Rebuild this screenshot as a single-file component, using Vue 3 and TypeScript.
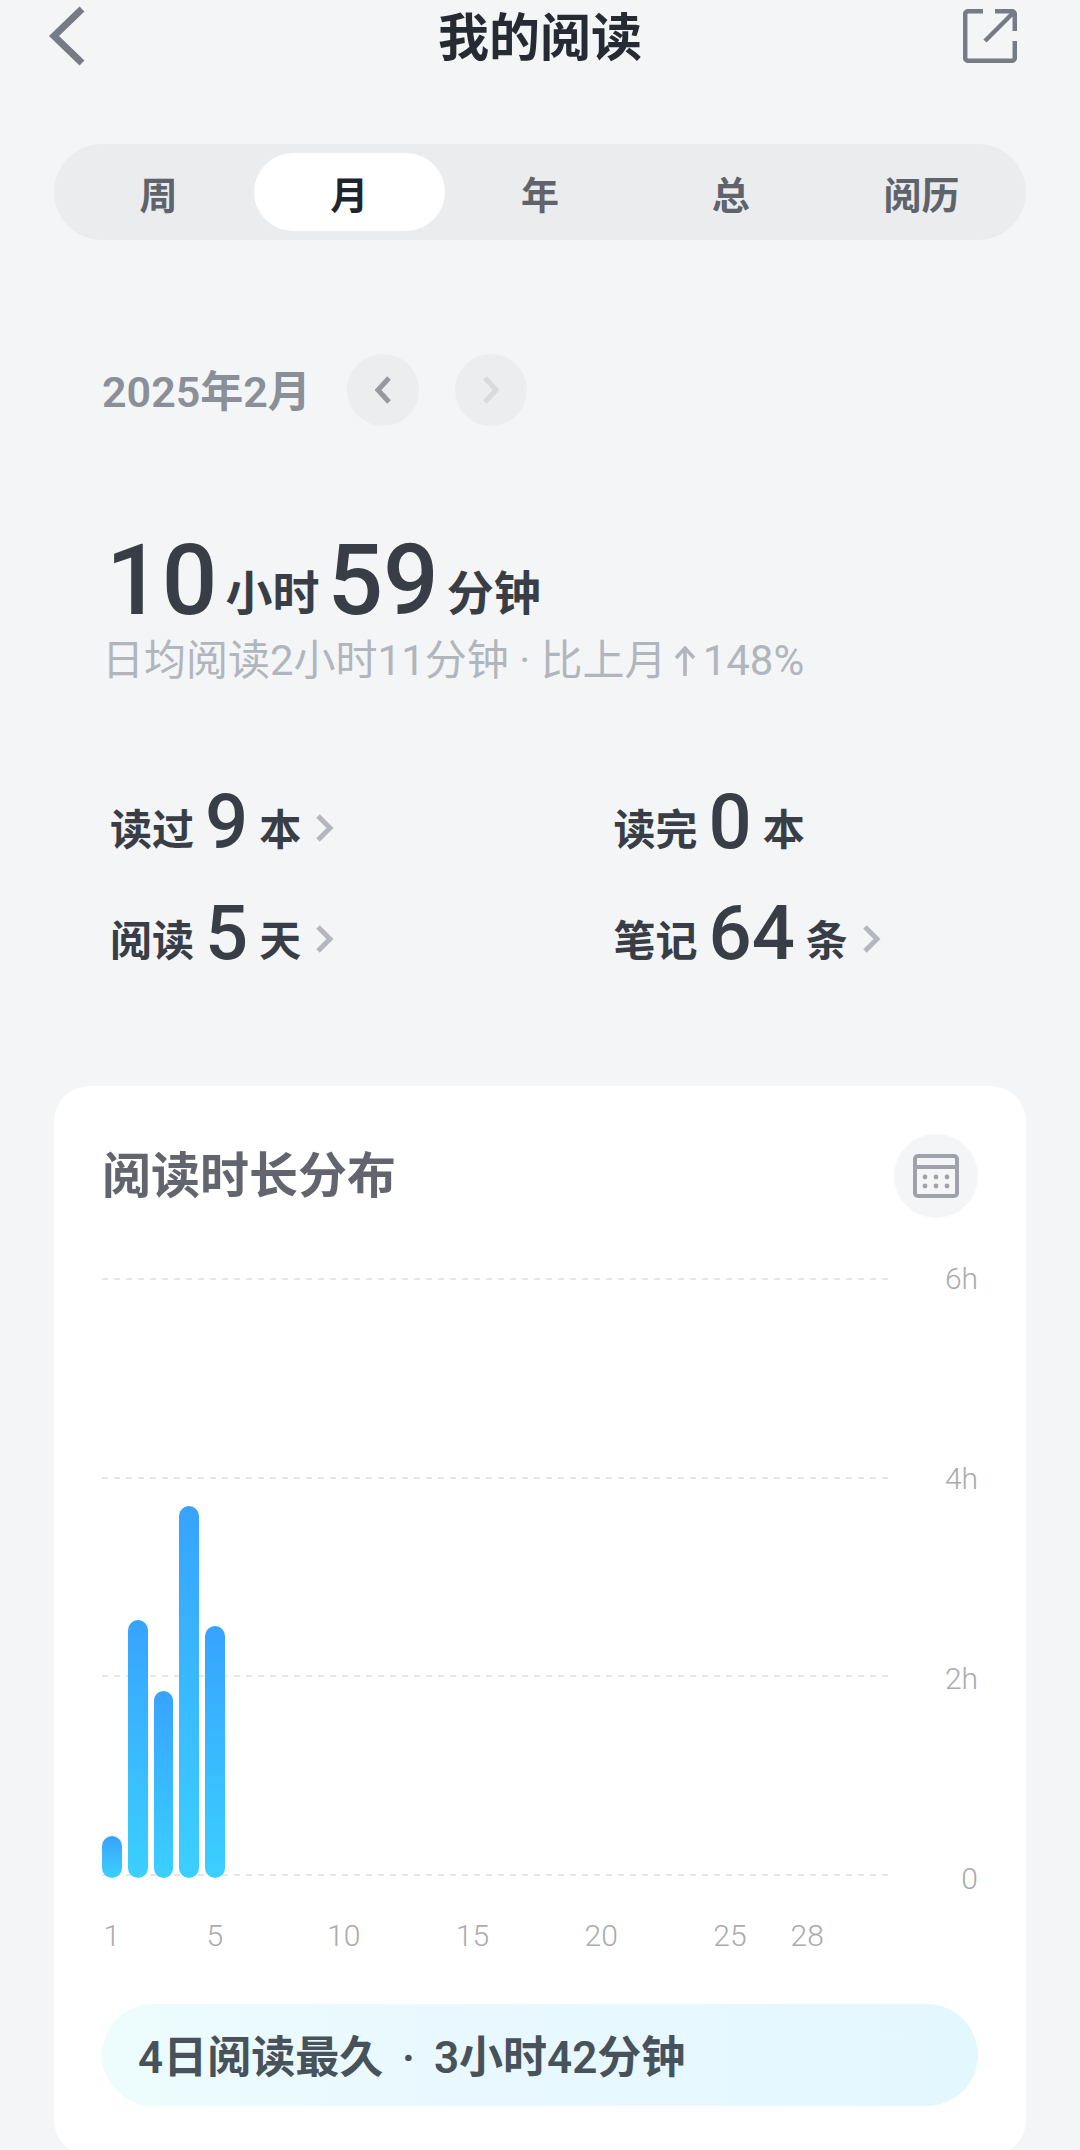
<script setup lang="ts">
import { ref } from 'vue'

interface Stat {
  label: string
  value: number
  unit: string
  link: boolean
}

interface DayBar {
  day: number
  minutes: number
}

const tabs: string[] = ['周', '月', '年', '总', '阅历']
const activeTab = ref('月')

const stats: Stat[] = [
  { label: '读过', value: 9, unit: '本', link: true },
  { label: '读完', value: 0, unit: '本', link: false },
  { label: '阅读', value: 5, unit: '天', link: true },
  { label: '笔记', value: 64, unit: '条', link: true },
]

const maxMinutes = 360
const axis: string[] = ['6h', '4h', '2h', '0']
const bars: DayBar[] = [
  { day: 1, minutes: 25 },
  { day: 2, minutes: 155 },
  { day: 3, minutes: 112 },
  { day: 4, minutes: 223 },
  { day: 5, minutes: 151 },
]
const dayLabels: number[] = [1, 5, 10, 15, 20, 25, 28]

const barHeight = (minutes: number): string => `${(minutes / maxMinutes) * 100}%`
</script>

<template>
  <main class="page">
    <header class="top">
      <button class="icon-btn" type="button" aria-label="返回">
        <svg width="38" height="60" viewBox="0 0 38 60" fill="none" stroke="#777b83" stroke-width="7">
          <path d="M34 3 6 30l28 27" />
        </svg>
      </button>
      <h1 class="title">我的阅读</h1>
      <button class="icon-btn" type="button" aria-label="分享">
        <svg width="54" height="54" viewBox="0 0 54 54" fill="none" stroke="#777b83" stroke-width="4.5">
          <path d="M20 2.2H5a2.8 2.8 0 0 0-2.8 2.8v44a2.8 2.8 0 0 0 2.8 2.8h44a2.8 2.8 0 0 0 2.8-2.8V32M32 2.2h17a2.8 2.8 0 0 1 2.8 2.8v17M51 3 22 32" />
        </svg>
      </button>
    </header>

    <nav class="tabs">
      <button
        v-for="tab in tabs"
        :key="tab"
        type="button"
        class="tab"
        :class="{ active: tab === activeTab }"
        @click="activeTab = tab"
      >
        {{ tab }}
      </button>
    </nav>

    <section class="summary">
      <div class="period">
        <span class="date">2025年2月</span>
        <button class="round" type="button" aria-label="上个月">
          <svg width="16" height="28" viewBox="0 0 16 28" fill="none" stroke="#96999d" stroke-width="5">
            <path d="M14 2 3 14l11 12" />
          </svg>
        </button>
        <button class="round" type="button" aria-label="下个月" disabled>
          <svg width="16" height="28" viewBox="0 0 16 28" fill="none" stroke="#d8dadc" stroke-width="5">
            <path d="m2 2 11 12L2 26" />
          </svg>
        </button>
      </div>

      <p class="total">
        <span class="big">10</span><span class="unit">小时</span>
        <span class="big">59</span><span class="unit">分钟</span>
      </p>
      <p class="average">
        <span>日均阅读2小时11分钟 · 比上月</span>
        <svg width="22" height="32" viewBox="0 0 22 32" fill="none" stroke="#b1b5bc" stroke-width="3.5">
          <path d="M11 31V3M2 13l9-10 9 10" />
        </svg>
        <span>148%</span>
      </p>

      <div class="stats">
        <component
          :is="stat.link ? 'a' : 'div'"
          v-for="stat in stats"
          :key="stat.label"
          class="stat"
          :href="stat.link ? '#' : undefined"
        >
          <span class="word">{{ stat.label }}</span>
          <span class="count">{{ stat.value }}</span>
          <span class="word">{{ stat.unit }}</span>
          <svg v-if="stat.link" class="more" width="18" height="28" viewBox="0 0 18 28" fill="none" stroke="#b4b8be" stroke-width="5">
            <path d="m2 2 12 12L2 26" />
          </svg>
        </component>
      </div>
    </section>

    <section class="card">
      <div class="card-head">
        <h2 class="card-title">阅读时长分布</h2>
        <button class="calendar" type="button" aria-label="日历">
          <svg width="46" height="44" viewBox="0 0 46 44" fill="none">
            <rect x="2" y="2" width="42" height="40" rx="3" stroke="#9fa2aa" stroke-width="4" />
            <path d="M2 13h42" stroke="#9fa2aa" stroke-width="4" />
            <g fill="#9fa2aa">
              <circle cx="12" cy="23" r="2.4" /><circle cx="23" cy="23" r="2.4" /><circle cx="34" cy="23" r="2.4" />
              <circle cx="12" cy="32" r="2.4" /><circle cx="23" cy="32" r="2.4" /><circle cx="34" cy="32" r="2.4" />
            </g>
          </svg>
        </button>
      </div>

      <div class="chart">
        <div class="plot">
          <div class="lines">
            <i v-for="mark in axis" :key="mark" class="line"></i>
          </div>
          <div class="days bars">
            <div
              v-for="bar in bars"
              :key="bar.day"
              class="bar"
              :style="{ gridColumn: bar.day, height: barHeight(bar.minutes) }"
            ></div>
          </div>
        </div>
        <div class="axis">
          <span v-for="mark in axis" :key="mark">{{ mark }}</span>
        </div>
        <div class="days labels">
          <span v-for="day in dayLabels" :key="day" class="day" :style="{ gridColumn: day }">{{ day }}</span>
        </div>
      </div>

      <p class="best">4日阅读最久 <span class="dot">·</span> 3小时42分钟</p>
    </section>
  </main>
</template>

<style>
body {
  margin: 0;
  background: #f3f5f7;
}
</style>

<style scoped>
.page {
  box-sizing: border-box;
  height: 100vh;
  overflow: hidden;
  padding: 0 54px;
  background: #f3f5f7;
  color: #383d46;
  font-family: Roboto, "Noto Sans CJK SC", sans-serif;
  font-weight: 500;
}

button {
  padding: 0;
  border: 0;
  background: none;
  color: inherit;
  font: inherit;
}

svg {
  display: block;
  flex: none;
}

h1,
h2,
p {
  margin: 0;
}

.top {
  display: flex;
  align-items: center;
  justify-content: space-between;
  height: 72px;
  margin: 0 -6px 72px;
}

.icon-btn {
  display: flex;
  width: 69px;
}

.title {
  padding-top: 6px;
  font-size: 51px;
  line-height: 72px;
  font-weight: 700;
  color: #252a33;
}

.tabs {
  display: flex;
  height: 78px;
  padding: 9px;
  border-radius: 48px;
  background: #eaecee;
}

.tab {
  flex: 1;
  padding-top: 2px;
  border-radius: 39px;
  font-family: "Noto Sans CJK SC", sans-serif;
  font-size: 38px;
  line-height: 76px;
  font-weight: 700;
  color: #5f636b;
}

.tab.active {
  background: #fff;
  color: #20252d;
}

.summary {
  padding: 114px 48px 0;
}

.period {
  display: flex;
  align-items: center;
  gap: 36px;
}

.date {
  padding-top: 4px;
  font-size: 43px;
  line-height: 68px;
  font-weight: 600;
  color: #8a8f98;
}

.round {
  display: flex;
  align-items: center;
  justify-content: center;
  width: 72px;
  height: 72px;
  border-radius: 50%;
  background: #ebedef;
}

.total {
  display: flex;
  align-items: flex-end;
  gap: 8px;
  margin: 106px 4px 0;
}

.big {
  font-size: 98px;
  line-height: 98px;
}

.unit {
  margin-bottom: 12px;
  font-size: 47px;
  line-height: 48px;
  font-weight: 700;
}

.average {
  display: flex;
  align-items: center;
  gap: 7px;
  margin-top: 4px;
  font-size: 42px;
  line-height: 54px;
  font-weight: 400;
  color: #b1b5bc;
}

.stats {
  display: grid;
  grid-template-columns: 58% 42%;
  row-gap: 35px;
  margin: 96px 0 0 8px;
}

.stat {
  display: flex;
  align-items: flex-end;
  gap: 11px;
  color: inherit;
  text-decoration: none;
}

.word {
  margin-bottom: 8px;
  font-size: 42px;
  line-height: 42px;
  font-weight: 700;
}

.count {
  font-size: 76px;
  line-height: 76px;
}

.more {
  margin: 0 0 18px 4px;
}

.card {
  margin-top: 115px;
  padding: 48px 48px 50px;
  border-radius: 36px;
  background: #fff;
}

.card-head {
  display: flex;
  align-items: center;
  justify-content: space-between;
}

.card-title {
  padding-top: 2px;
  font-size: 49px;
  line-height: 82px;
  font-weight: 700;
  color: #62656d;
}

.calendar {
  display: flex;
  align-items: center;
  justify-content: center;
  width: 84px;
  height: 84px;
  border-radius: 50%;
  background: #f4f5f6;
}

.chart {
  display: grid;
  grid-template-columns: 1fr 90px;
  margin-top: 60px;
  color: #a9abae;
  font-size: 30px;
  line-height: 30px;
  font-weight: 300;
}

.plot {
  display: grid;
  height: 600px;
}

.lines,
.bars {
  grid-area: 1 / 1;
}

.lines {
  display: flex;
  flex-direction: column;
  justify-content: space-between;
  padding-bottom: 2px;
}

.line {
  height: 2px;
  background: repeating-linear-gradient(90deg, #e5e6e7 0 6px, transparent 6px 12px);
}

.days {
  display: grid;
  grid-template-columns: repeat(28, minmax(0, 1fr));
  column-gap: 6px;
  margin-right: 71px;
}

.bars {
  align-items: end;
}

.bar {
  border-radius: 10px;
  background: linear-gradient(#37a3ff, #3bd0ff);
}

.axis {
  display: flex;
  flex-direction: column;
  justify-content: space-between;
  margin: -14px 0 -16px;
  text-align: right;
}

.labels {
  margin-top: 43px;
}

.day {
  display: flex;
  justify-content: center;
}

.best {
  margin-top: 53px;
  padding: 6px 36px 0;
  border-radius: 51px;
  background: linear-gradient(90deg, #edfcfc, #e9f8ff 45%, #e3f7fe);
  color: #47525a;
  font-size: 44px;
  line-height: 96px;
  font-weight: 600;
}

.dot {
  margin: 0 8px;
}
</style>
